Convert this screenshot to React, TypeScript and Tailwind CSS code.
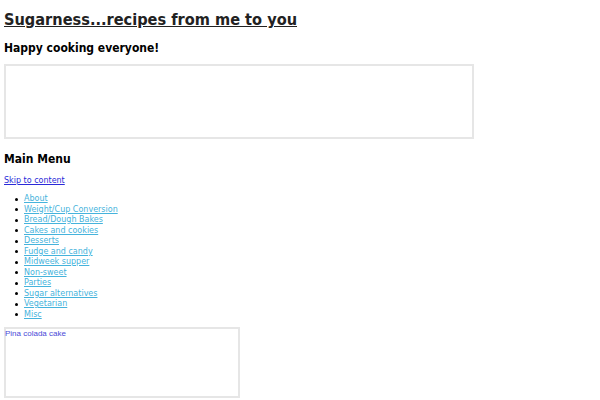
import React from 'react'

const menu = [
    "About",
    "Weight/Cup Conversion",
    "Bread/Dough Bakes",
    "Cakes and cookies",
    "Desserts",
    "Fudge and candy",
    "Midweek supper",
    "Non-sweet",
    "Parties",
    "Sugar alternatives",
    "Vegetarian",
    "Misc",
];

const App = () => {
    return (
        <div className="px-[4px] pt-[9px] font-['DejaVu_Sans',sans-serif] text-black">
            <h1 className="font-['DejaVu_Sans_Condensed','DejaVu_Sans',sans-serif] text-[16.2px] leading-[22px] font-bold">
                <a href="#" className="text-[#222] underline">Sugarness...recipes from me to you</a>
            </h1>
            <h2 className="mt-[9px] font-['DejaVu_Sans_Condensed','DejaVu_Sans',sans-serif] text-[12px] leading-[16px] font-bold">Happy cooking everyone!</h2>

            <div className="mt-[8px] w-[470px] h-[75px] border-2 border-[#e6e6e6]"></div>

            <h2 className="mt-[12px] font-['DejaVu_Sans_Condensed','DejaVu_Sans',sans-serif] text-[12px] leading-[16px] font-bold">Main Menu</h2>

            <a href="#" className="block mt-[8px] text-[8px] leading-[12px] text-[#2a2ad8] underline">Skip to content</a>

            <ul className="mt-[7px] pl-[20px] list-none text-[8px] leading-[10.5px]">
                {menu.map((item) => (
                    <li key={item} className="flex items-center">
                        <span className="-ml-[9px] mr-[6px] w-[3px] h-[3px] rounded-full bg-black"></span>
                        <a href="#" className="text-[#45b3dc] underline">{item}</a>
                    </li>
                ))}
            </ul>

            <div className="mt-[7px] w-[236px] h-[71px] border-2 border-[#e6e6e6]">
                <a href="#" className="block -ml-[1px] font-['Liberation_Sans',sans-serif] text-[8px] leading-[10px] font-medium text-[#4a4ad8]">Pina colada cake</a>
            </div>
        </div>
    );
}

export default App
